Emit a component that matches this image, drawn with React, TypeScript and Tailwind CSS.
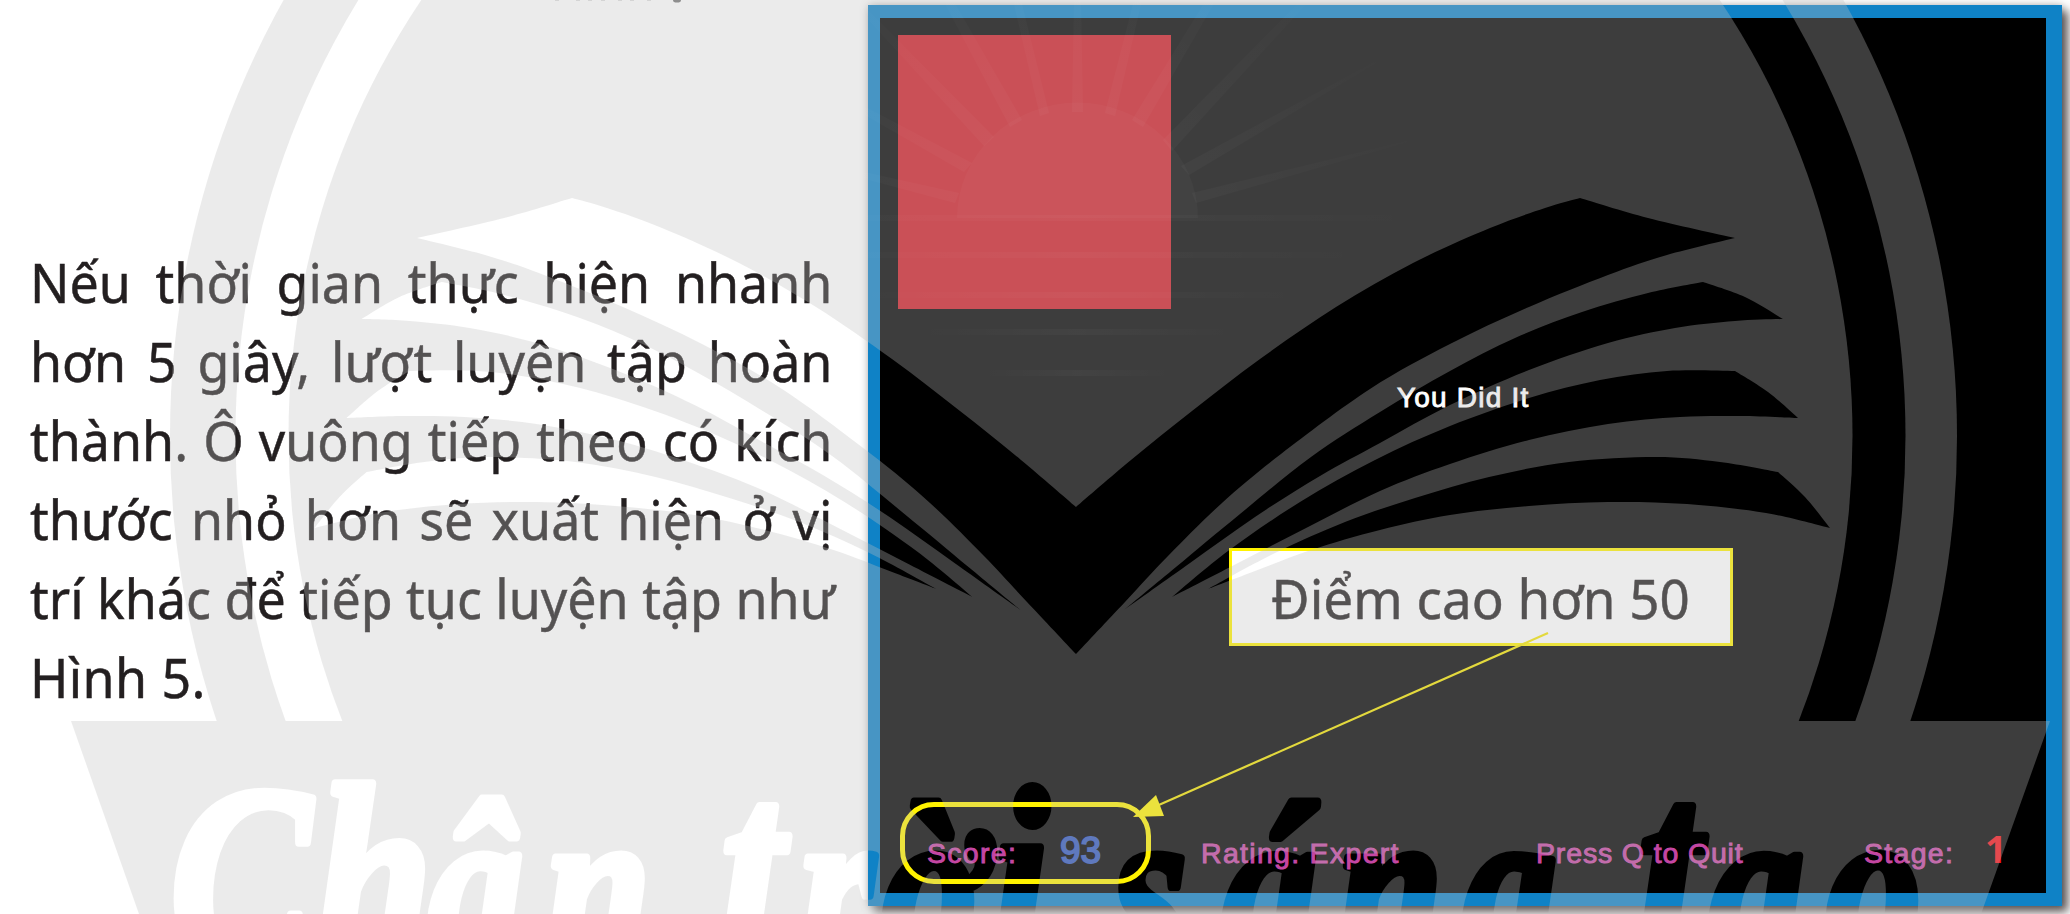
type Pt = [number, number];

// Catmull-Rom spline through the points, written as cubic segments.
function curve(p: Pt[]): string {
  let d = "";
  for (let i = 0; i < p.length - 1; i++) {
    const a = p[Math.max(i - 1, 0)];
    const b = p[i];
    const c = p[i + 1];
    const e = p[Math.min(i + 2, p.length - 1)];
    d += `C${b[0] + (c[0] - a[0]) / 6} ${b[1] + (c[1] - a[1]) / 6} ${c[0] - (e[0] - b[0]) / 6} ${c[1] - (e[1] - b[1]) / 6} ${c[0]} ${c[1]}`;
  }
  return d;
}

function outline(...edges: Pt[][]): string {
  return `M${edges[0][0][0]} ${edges[0][0][1]}` + edges.map(curve).join("") + "Z";
}

const cover = outline(
  [[1076, 507], [1131, 460], [1192, 411], [1260, 359], [1336, 307], [1413, 263], [1490, 228], [1545, 208], [1580, 198]],
  [[1580, 198], [1648, 218], [1735, 238]],
  [[1735, 238], [1667, 255], [1608, 275], [1529, 307], [1450, 344], [1370, 389], [1281, 454], [1222, 503], [1168, 556], [1125, 602], [1076, 654]],
  [[1076, 654], [1076, 507]],
);

const pages = [
  outline(
    [[1124, 610], [1176, 567], [1240, 514], [1311, 457], [1380, 412], [1450, 371], [1515, 338], [1582, 312], [1648, 293], [1703, 282]],
    [[1703, 282], [1745, 297], [1783, 319]],
    [[1783, 319], [1735, 321], [1675, 328], [1608, 343], [1529, 370], [1450, 405], [1380, 443], [1320, 476], [1255, 517], [1190, 563], [1124, 610]],
  ),
  outline(
    [[1172, 597], [1228, 551], [1300, 502], [1375, 460], [1450, 426], [1529, 398], [1600, 380], [1667, 371], [1735, 371]],
    [[1735, 371], [1768, 392], [1798, 418]],
    [[1798, 418], [1740, 416], [1680, 417], [1608, 424], [1529, 440], [1450, 464], [1380, 491], [1310, 526], [1240, 562], [1172, 597]],
  ),
  outline(
    [[1208, 589], [1275, 553], [1345, 522], [1415, 498], [1489, 477], [1569, 462], [1656, 457], [1720, 462], [1778, 472]],
    [[1778, 472], [1805, 497], [1830, 528]],
    [[1830, 528], [1766, 513], [1687, 504], [1608, 502], [1529, 506], [1450, 515], [1380, 530], [1311, 550], [1255, 571], [1208, 589]],
  ),
];

const rays: Pt[][] = [
  [[1040, 116], [1049, 113], [1021, 0], [1013, 0]],
  [[1010, 127], [1022, 120], [953, 0], [943, 0]],
  [[984, 146], [994, 137], [868, 10], [864, 15]],
  [[964, 172], [972, 163], [780, 62], [776, 64]],
  [[955, 203], [959, 193], [765, 150], [764, 152]],
  [[1072, 112], [1083, 112], [1081, 0], [1074, 0]],
  [[1105, 113], [1115, 116], [1142, 0], [1134, 0]],
  [[1132, 120], [1143, 127], [1216, 0], [1206, 0]],
  [[1163, 140], [1172, 151], [1310, 0], [1301, 0]],
  [[1181, 166], [1189, 175], [1378, 62], [1374, 62]],
  [[1192, 193], [1196, 203], [1408, 142], [1406, 141]],
];

const stripes: Pt[] = [[218, 345], [255, 290], [295, 225], [332, 160], [373, 95]];

const condense = 0.8;

// Letters of the banner lettering: glyph, left edge, size.
const words: [string, number, number][][] = [
  [["C", 170, 264], ["h", 315, 264], ["â", 428, 238], ["n", 545, 238]],
  [["t", 720, 285], ["r", 800, 238], ["ờ", 882, 238], ["i", 991, 260]],
  [["s", 1113, 238], ["á", 1222, 238], ["n", 1337, 238], ["g", 1462, 238]],
  [["t", 1637, 285], ["ạ", 1709, 238], ["o", 1826, 238]],
];

function Watermark() {
  return (
    <svg className="pointer-events-none absolute inset-0 z-10" width="2070" height="914" viewBox="0 0 2070 914" aria-hidden="true">
      <defs>
        <mask id="emblem" maskUnits="userSpaceOnUse" x="0" y="0" width="2070" height="914">
          <g clipPath="url(#upper)">
            <circle cx="1063.5" cy="436" r="893.5" fill="#fff" />
            <circle cx="1070.5" cy="436" r="835" fill="#000" />
            <circle cx="1070.5" cy="436" r="782" fill="#fff" />
          </g>
          <path d="M71 721H2050L1981 914H139Z" fill="#fff" />
          <path d={cover} />
          <path d={cover} transform="translate(2152 0) scale(-1 1)" />
          {pages.map((d, i) => (
            <g key={i}>
              <path d={d} />
              <path d={d} transform="translate(2144.5 0) scale(-1 1)" />
            </g>
          ))}
          {words.map((letters, i) => (
            <text
              key={i}
              y="967"
              transform={`scale(${condense} 1)`}
              className="font-['Liberation_Serif',serif] font-bold italic"
              stroke="#000"
              strokeWidth="9"
              strokeLinejoin="round"
            >
              {letters.map(([glyph, x, size]) => (
                <tspan key={x} x={x / condense} fontSize={size}>
                  {glyph}
                </tspan>
              ))}
            </text>
          ))}
        </mask>
        <clipPath id="upper">
          <rect width="2070" height="721.5" />
        </clipPath>
        <linearGradient id="fade">
          <stop offset="0" stopColor="#fff" stopOpacity="0" />
          <stop offset=".5" stopColor="#fff" stopOpacity=".03" />
          <stop offset="1" stopColor="#fff" stopOpacity="0" />
        </linearGradient>
        <radialGradient id="glow" gradientUnits="userSpaceOnUse" cx="1077" cy="225" r="340">
          <stop offset=".3" stopColor="#fff" stopOpacity=".03" />
          <stop offset="1" stopColor="#fff" stopOpacity=".004" />
        </radialGradient>
      </defs>
      <rect width="2070" height="914" fill="#c1c1c0" fillOpacity=".318" mask="url(#emblem)" />
      <path d="M957 218A120 115 0 0 1 1198 218Z" fill="#fff" fillOpacity=".026" />
      {rays.map((r, i) => (
        <polygon key={i} points={r.map((q) => q.join(",")).join(" ")} fill="url(#glow)" />
      ))}
      {stripes.map(([y, half]) => (
        <rect key={y} x={1077 - half} y={y - 3} width={half * 2} height="6" fill="url(#fade)" />
      ))}
    </svg>
  );
}

const lines = [
  "Nếu thời gian thực hiện nhanh",
  "hơn 5 giây, lượt luyện tập hoàn",
  "thành. Ô vuông tiếp theo có kích",
  "thước nhỏ hơn sẽ xuất hiện ở vị",
  "trí khác để tiếp tục luyện tập như",
];

function Paragraph() {
  return (
    <div className="h-[474px] w-[802px] text-[55px] leading-[79px] text-[#231f20] [-webkit-text-stroke:0.5px_#231f20]">
      <div className="w-[850px] origin-top-left scale-x-[0.944] whitespace-nowrap font-['Noto_Sans',sans-serif]">
        {lines.map((l) => (
          <div key={l} className="[text-align-last:justify]">
            {l}
          </div>
        ))}
        <div className="tracking-[0.4px]">Hình 5.</div>
      </div>
    </div>
  );
}

function StatusBar() {
  return (
    <div className="flex h-[50px] items-baseline whitespace-nowrap text-[28.5px] leading-[50px] tracking-[1.3px] text-[#c4469f] [-webkit-text-stroke:0.9px_#c848a8]">
      <span className="w-[133px]">Score:</span>
      <span className="w-[141px] text-[37px] tracking-normal text-[#3258bd] [-webkit-text-stroke:1.8px_#3258bd]">93</span>
      <span className="w-[335px]">Rating: Expert</span>
      <span className="w-[328px] tracking-[0.85px]">Press Q to Quit</span>
      <span className="w-[121px]">Stage:</span>
      <span className="font-['Open_Sans',sans-serif] text-[38px] font-bold tracking-normal text-[#f6131a] [-webkit-text-stroke:0]">1</span>
    </div>
  );
}

function GameFrame() {
  return (
    <div className="relative flex h-[901px] w-[1194px] flex-col border-y-[13px] border-l-[12px] border-r-[16px] border-[#0f82c6] bg-black shadow-[6px_6px_9px_rgba(50,40,40,0.75),0_0_8px_rgba(0,0,0,0.25)]">
      <div className="ml-[18px] mt-[17px] h-[274px] w-[273px] bg-[#cf1c27]" />
      <div className="ml-[517px] mt-[69px] h-[40px] whitespace-nowrap text-[28px] leading-[40px] tracking-[1.2px] text-white [-webkit-text-stroke:0.9px_#fff]">
        You Did It
      </div>
      <div className="ml-[349px] mt-[130px] flex h-[98px] w-[504px] items-center whitespace-nowrap border-[3px] border-[#fff200] bg-white pl-[39px] pt-[2px] font-['Noto_Sans',sans-serif] text-[55px] leading-[90px] text-[#231f20] [-webkit-text-stroke:0.5px_#231f20]">
        <span className="origin-left scale-x-[0.963]">Điểm cao hơn 50</span>
      </div>
      <div className="ml-[47px] mt-[177px]">
        <StatusBar />
      </div>
      <div className="absolute left-[20px] top-[784px] h-[82px] w-[251px] rounded-[34px] border-[5px] border-[#fff200]" />
      <svg className="absolute left-[240px] top-[600px]" width="450" height="220" viewBox="1120 618 450 220">
        <path d="M1548 633L1152 808" stroke="#f4e500" strokeWidth="2.2" />
        <path d="M1133 817L1156 795L1164 816Z" fill="#fff200" />
      </svg>
    </div>
  );
}

function CaptionRemnant() {
  return (
    <svg className="absolute left-[550px] top-0" width="140" height="3" aria-hidden="true">
      <ellipse cx="127" cy="0" rx="4" ry="2.6" fill="#777" />
      {[7, 28, 40, 53, 70, 82, 99].map((x) => (
        <rect key={x} x={x - 2} y="0" width="4" height="1" fill="#ddd" />
      ))}
    </svg>
  );
}

export default function App() {
  return (
    <main className="relative flex h-[914px] w-[2070px] items-start overflow-hidden bg-white font-['Liberation_Sans',Arial,sans-serif]">
      <div className="w-[868px] shrink-0 pl-[30px] pt-[242px]">
        <Paragraph />
      </div>
      <div className="shrink-0 pt-[5px]">
        <GameFrame />
      </div>
      <CaptionRemnant />
      <Watermark />
    </main>
  );
}
